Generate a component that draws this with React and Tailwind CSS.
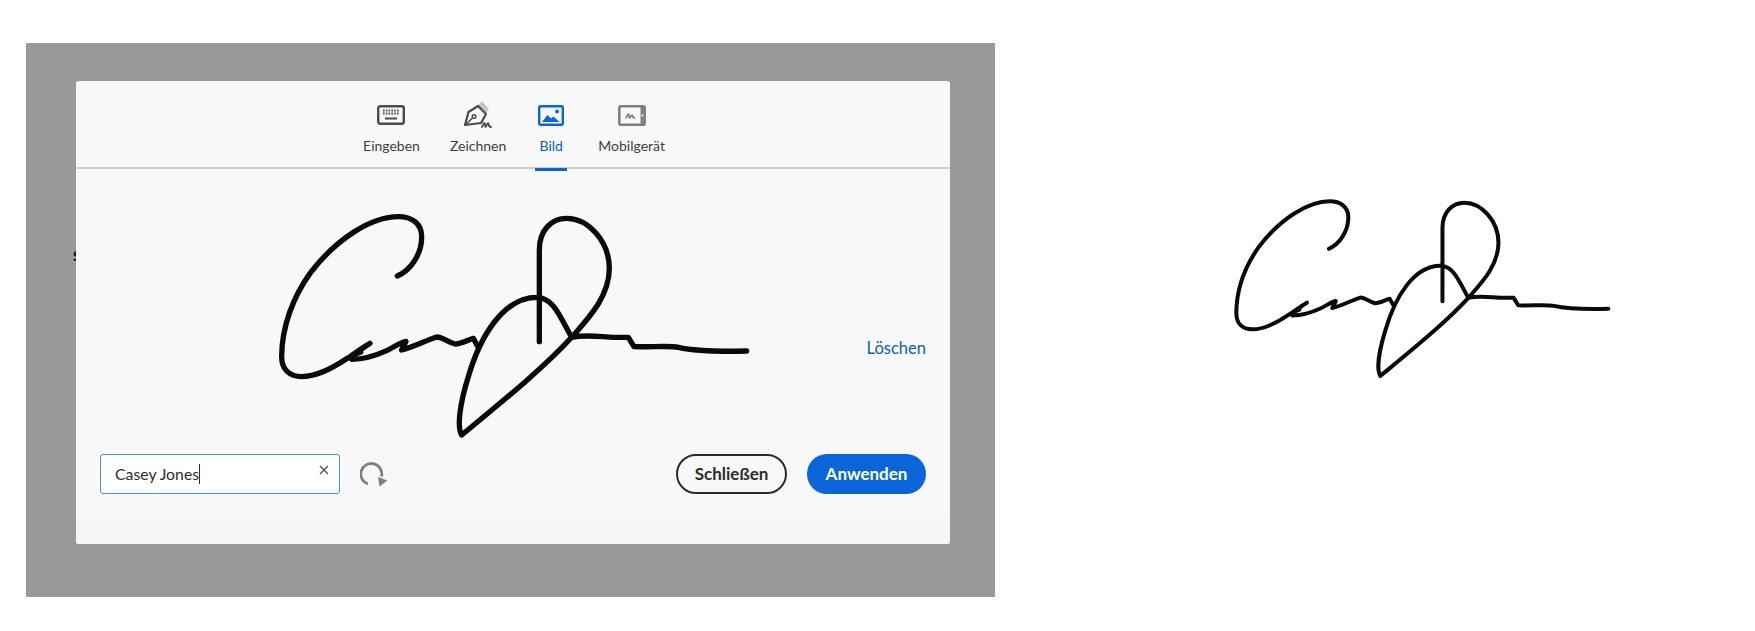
const sigPaths = [
  "M412 228C450 212 485 165 485 110C485 70 455 50 415 50C335 50 230 115 150 220C100 290 65 380 65 470C65 510 90 530 125 530C170 530 225 500 262 475C285 460 310 440 330 430L288 458L275 478C305 478 345 468 380 452C398 444 418 428 438 424L425 450C460 442 495 422 530 411C550 412 562 426 585 432C605 432 622 420 640 415L652 437",
  "M838 425L838 150C838 90 875 55 920 55C985 55 1048 125 1048 205C1048 290 985 355 935 412C850 505 720 610 605 705C590 680 600 610 625 530C660 410 730 292 830 292C880 292 900 350 935 412C980 402 1030 412 1060 412L1105 412L1122 440C1170 442 1230 436 1255 442C1300 452 1380 455 1460 453",
  "M282 464L302 456",
];

function Signature({ className, width }) {
  return (
    <svg viewBox="0 0 1560 750" className={className} fill="none" stroke="#0a0a0a" strokeWidth={width} strokeLinecap="round" strokeLinejoin="round">
      {sigPaths.map((d) => (
        <path key={d} d={d} />
      ))}
    </svg>
  );
}

function KeyboardIcon() {
  return (
    <svg width="28" height="20" viewBox="0 0 28 20" fill="none">
      <rect x="1.2" y="1.2" width="25.6" height="17.6" rx="2" stroke="#4b4b4b" strokeWidth="2.4" />
      <path d="M6 5.5h16M6 8.5h16" stroke="#4b4b4b" strokeWidth="1.8" strokeDasharray="1.6 1.2" />
      <path d="M8 13.5h12" stroke="#4b4b4b" strokeWidth="2" />
    </svg>
  );
}

function PenIcon() {
  return (
    <svg width="30" height="28" viewBox="0 0 30 28" fill="none">
      <path d="M15 4l4-4 7 8-3 4z" fill="#c4c4c4" />
      <path d="M2 24L5.5 11 15 5l8 8-5 9z" stroke="#4b4b4b" strokeWidth="2.2" strokeLinejoin="round" />
      <path d="M2.5 24l7-7" stroke="#4b4b4b" strokeWidth="1.6" />
      <circle cx="11" cy="15.5" r="1.8" stroke="#4b4b4b" strokeWidth="1.4" />
      <path d="M19 26c1-2 1.5-4 2.5-4s0 4 1 4 1.5-4 2.5-4 0 4 3 4" stroke="#4b4b4b" strokeWidth="1.8" strokeLinecap="round" />
    </svg>
  );
}

function ImageIcon() {
  return (
    <svg width="26" height="21" viewBox="0 0 26 21" fill="none">
      <rect x="1.2" y="1.2" width="23.6" height="18.6" rx="1.5" stroke="#0a66d8" strokeWidth="2.4" />
      <path d="M4 17l5.5-7 3.5 3.5 2.5-2 6 5.5z" fill="#0a66d8" />
      <circle cx="19" cy="6.5" r="1.9" fill="#0a66d8" />
    </svg>
  );
}

function TabletIcon() {
  return (
    <svg width="28" height="21" viewBox="0 0 28 21" fill="none">
      <rect x="1.3" y="1.3" width="25.4" height="18.4" rx="1.5" stroke="#808080" strokeWidth="2.6" />
      <rect x="22.5" y="2" width="4" height="17" fill="#808080" />
      <circle cx="24.5" cy="10.5" r="1.1" fill="#f8f8f8" />
      <path d="M8 13c1-2 1.5-4 2.5-4s0 4 1 4 1.5-3 2.5-3 0 3 2.5 3" stroke="#6e6e6e" strokeWidth="1.4" strokeLinecap="round" />
    </svg>
  );
}

const tabs = [
  { label: "Eingeben", icon: <KeyboardIcon />, extra: "-mr-[4px]" },
  { label: "Zeichnen", icon: <PenIcon />, extra: "-mr-[2px]" },
  { label: "Bild", icon: <ImageIcon />, active: true, extra: "" },
  { label: "Mobilgerät", icon: <TabletIcon />, extra: "" },
];

export default function App() {
  return (
    <div className="flex h-[631px] w-[1755px] items-start overflow-hidden bg-white font-['Lato',sans-serif]">
      <div className="relative ml-[26px] mt-[43px] h-[554px] w-[969px] shrink-0 overflow-hidden bg-[#999999] pl-[50px] pt-[38px]">
        <span className="absolute left-[47px] top-[203px] text-sm font-bold text-black">S</span>
        <div className="relative flex h-[463px] w-[874px] flex-col rounded-[3px] bg-[#f8f8f8]">
          {/* Tabs */}
          <div className="flex h-[88px] shrink-0 items-start justify-center gap-[30px] border-b-2 border-[#d0d0d0] pl-[2px]">
            {tabs.map((tab) => (
              <div key={tab.label} className={`relative flex h-[88px] flex-col items-center px-[2px] pt-[21px] ${tab.extra}`}>
                <div className="flex h-[26px] items-center">{tab.icon}</div>
                <span className={`mt-[8px] text-sm leading-5 ${tab.active ? "text-[#0b5fb8]" : "text-[#3f3f3f]"}`}>{tab.label}</span>
                {tab.active && <div className="absolute -bottom-[2px] -left-[1px] -right-[1px] h-[3px] bg-[#0a66d8]" />}
              </div>
            ))}
          </div>

          {/* Signature */}
          <div className="flex items-start justify-between pl-[184px] pr-6 pt-[31px]">
            <Signature className="h-[250px] w-[520px] shrink-0" width="16" />
            <button className="mt-[138px] text-[16.5px] leading-5 text-[#0b5fb0]">Löschen</button>
          </div>

          {/* Name field and actions */}
          <div className="mt-[4px] flex items-center pl-6 pr-6">
            <div className="relative flex h-10 w-[240px] items-center rounded-[3px] border border-[#4a90e2] bg-white pl-[14px]">
              <span className="text-[15.8px] text-[#2c2c2c]">Casey Jones</span>
              <span className="h-[20px] w-px bg-[#2c2c2c]" />
              <svg className="absolute right-[10px] top-[10px]" width="10" height="10" viewBox="0 0 10 10" stroke="#4b4b4b" strokeWidth="1.3">
                <path d="M1 1l8 8M9 1l-8 8" />
              </svg>
            </div>
            <svg className="ml-5" width="29" height="27" viewBox="0 0 29 27" fill="none">
              <path d="M8 23A10.5 10.5 0 1 1 21.5 15.5" stroke="#808080" strokeWidth="2.8" />
              <path d="M18 16L27.5 19.500 19.500 25.500z" fill="#808080" />
            </svg>
            <button className="ml-auto h-10 w-[111px] rounded-full border-2 border-[#2c2c2c] text-[17px] font-bold text-[#2c2c2c]">Schließen</button>
            <button className="ml-5 h-10 w-[119px] rounded-full bg-[#0a66d8] text-[17px] font-bold text-white">Anwenden</button>
          </div>

          <div className="mt-auto h-[26px] rounded-b-[3px] bg-[#f5f5f5]" />
        </div>
      </div>
      <Signature className="ml-[224px] mt-[188px] h-[200px] w-[416px] shrink-0" width="15" />
    </div>
  );
}
